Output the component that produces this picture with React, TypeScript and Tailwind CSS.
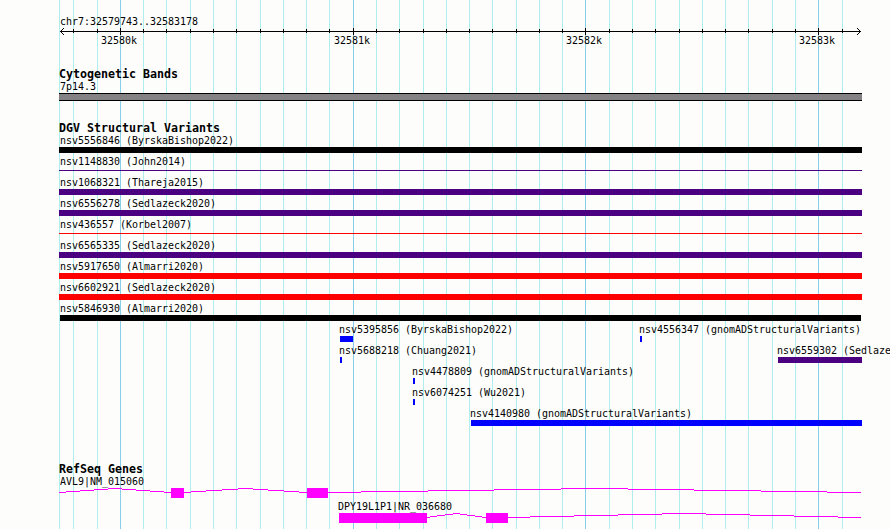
const minorTicks = [
  73, 97, 143, 166, 190, 213, 236, 260, 283, 306, 329, 376, 399, 423, 446, 469, 492, 516, 539, 562,
  609, 632, 655, 679, 702, 725, 748, 772, 795, 842,
];
const majorTicks = [
  { x: 120, label: "32580k" },
  { x: 353, label: "32581k" },
  { x: 585, label: "32582k" },
  { x: 818, label: "32583k" },
];

type Feature = { start: number; end: number; label: string; color: string; thin?: boolean };

const INDIGO = "bg-[#4b0082]";
const RED = "bg-[#ff0000]";
const BLUE = "bg-[#0000ff]";

const variants: Feature[][] = [
  [{ start: 59, end: 862, label: "nsv5556846 (ByrskaBishop2022)", color: "bg-black" }],
  [{ start: 59, end: 862, label: "nsv1148830 (John2014)", color: INDIGO, thin: true }],
  [{ start: 59, end: 862, label: "nsv1068321 (Thareja2015)", color: INDIGO }],
  [{ start: 59, end: 862, label: "nsv6556278 (Sedlazeck2020)", color: INDIGO }],
  [{ start: 59, end: 862, label: "nsv436557 (Korbel2007)", color: RED, thin: true }],
  [{ start: 59, end: 862, label: "nsv6565335 (Sedlazeck2020)", color: INDIGO }],
  [{ start: 59, end: 862, label: "nsv5917650 (Almarri2020)", color: RED }],
  [{ start: 59, end: 862, label: "nsv6602921 (Sedlazeck2020)", color: RED }],
  [{ start: 60, end: 861, label: "nsv5846930 (Almarri2020)", color: "bg-black" }],
  [
    { start: 340, end: 353, label: "nsv5395856 (ByrskaBishop2022)", color: BLUE },
    { start: 640, end: 642, label: "nsv4556347 (gnomADStructuralVariants)", color: BLUE },
  ],
  [
    { start: 340, end: 342, label: "nsv5688218 (Chuang2021)", color: BLUE },
    { start: 778, end: 862, label: "nsv6559302 (Sedlazeck2020)", color: INDIGO },
  ],
  [{ start: 413, end: 415, label: "nsv4478809 (gnomADStructuralVariants)", color: BLUE }],
  [{ start: 413, end: 415, label: "nsv6074251 (Wu2021)", color: BLUE }],
  [{ start: 471, end: 862, label: "nsv4140980 (gnomADStructuralVariants)", color: BLUE }],
];

// Each intron rises four pixels to its midpoint and falls back to the base line.
const introns = [
  { base: 6, xs: [59, 66, 80, 94, 108, 122, 136, 150, 164, 171] },
  { base: 6, xs: [184, 191, 206, 222, 238, 253, 268, 284, 299, 307] },
  { base: 6, xs: [328, 361, 428, 494, 561, 628, 694, 761, 827, 861] },
];
const introns2 = [
  { base: 6, xs: [427, 430, 437, 445, 453, 460, 467, 475, 482, 486] },
  { base: 6, xs: [508, 530, 574, 618, 662, 706, 750, 794, 838, 861] },
];

function Label({ children }: { children: string }) {
  return (
    <span className="block origin-left scale-x-[0.906] pt-[2px] text-[11px] leading-[13px] whitespace-pre">
      {children}
    </span>
  );
}

function Heading({ children }: { children: string }) {
  return (
    <h2 className="ml-[59px] h-[10px] origin-left scale-x-[0.969] text-[12px] leading-[13px] font-bold whitespace-pre">
      {children}
    </h2>
  );
}

function Gene({
  parts,
  exons,
}: {
  parts: { base: number; xs: number[] }[];
  exons: [number, number][];
}) {
  return (
    <svg width="890" height="12" shapeRendering="crispEdges" fill="#ff00ff" className="block">
      {parts.flatMap((p) =>
        p.xs.slice(0, -1).map((x, i) => (
          <rect
            key={x}
            x={x}
            y={p.base - 4 + Math.abs(4 - i)}
            width={p.xs[i + 1] - x}
            height="1"
          />
        )),
      )}
      {exons.map(([a, b]) => (
        <rect key={a} x={a} y="2" width={b - a} height="10" />
      ))}
    </svg>
  );
}

function Grid() {
  return (
    <svg
      width="890"
      height="529"
      shapeRendering="crispEdges"
      className="absolute top-0 left-0 -z-10"
    >
      {[59, ...minorTicks].map((x) => (
        <rect key={x} x={x} y="0" width="1" height="529" fill="#afeeee" />
      ))}
      {majorTicks.map(({ x }) => (
        <rect key={x} x={x} y="0" width="1" height="529" fill="#87ceeb" />
      ))}
    </svg>
  );
}

function Ruler() {
  return (
    <svg width="890" height="7" shapeRendering="crispEdges" className="block">
      <rect x="60" y="3" width="801" height="1" />
      {minorTicks.map((x) => (
        <rect key={x} x={x} y="1" width="1" height="4" />
      ))}
      {majorTicks.map(({ x }) => (
        <rect key={x} x={x} y="0" width="1" height="7" />
      ))}
      {[1, 2, 3].map((d) => (
        <g key={d}>
          <rect x={60 + d} y={3 - d} width="1" height="1" />
          <rect x={60 + d} y={3 + d} width="1" height="1" />
          <rect x={860 - d} y={3 - d} width="1" height="1" />
          <rect x={860 - d} y={3 + d} width="1" height="1" />
        </g>
      ))}
    </svg>
  );
}

function VariantRow({ features }: { features: Feature[] }) {
  return (
    <div className="flex h-[21px]">
      {features.map((f, i) => {
        const previousEnd = i === 0 ? 0 : features[i - 1].end;
        const indent = f.start === 59 ? "ml-px" : f.start > 60 ? "-ml-px" : "";
        return (
          <div
            key={f.label}
            className="shrink-0"
            style={{ marginLeft: f.start - previousEnd, width: f.end - f.start }}
          >
            <div className={`h-[15px] ${indent}`}>
              <Label>{f.label}</Label>
            </div>
            <div className={`${f.color} ${f.thin ? "mt-[2px] h-px" : "h-[6px]"}`} />
          </div>
        );
      })}
    </div>
  );
}

export default function App() {
  return (
    <main className="relative isolate flex h-[529px] w-[890px] flex-col overflow-hidden bg-[#fdfefc] pt-[13px] font-['DejaVu_Sans_Mono',monospace] text-black">
      <Grid />
      <header className="h-[54px] shrink-0">
        <div className="ml-[60px] h-[15px]">
          <Label>chr7:32579743..32583178</Label>
        </div>
        <Ruler />
        <div className="-mt-[3px] flex pl-[101px]">
          {majorTicks.map(({ x, label }, i) => (
            <div
              key={label}
              className="shrink-0"
              style={{ width: i < 3 ? majorTicks[i + 1].x - x : 60 }}
            >
              <Label>{label}</Label>
            </div>
          ))}
        </div>
      </header>
      <section className="h-[54px] shrink-0 pt-px">
        <Heading>Cytogenetic Bands</Heading>
        <div className="ml-[60px] h-[15px]">
          <Label>7p14.3</Label>
        </div>
        <div className="ml-[59px] h-[8px] w-[803px] border-y border-black bg-[#848284]" />
      </section>
      <section className="h-[341px] shrink-0 pt-px">
        <Heading>DGV Structural Variants</Heading>
        <div>
          {variants.map((row) => (
            <VariantRow key={row[0].label} features={row} />
          ))}
        </div>
      </section>
      <section className="shrink-0 pt-px">
        <Heading>RefSeq Genes</Heading>
        <div className="ml-[60px] h-[13px]">
          <Label>AVL9|NM_015060</Label>
        </div>
        <Gene
          parts={introns}
          exons={[
            [171, 184],
            [307, 328],
          ]}
        />
        <div className="ml-[338px] h-[13px]">
          <Label>DPY19L1P1|NR_036680</Label>
        </div>
        <Gene
          parts={introns2}
          exons={[
            [339, 427],
            [486, 508],
          ]}
        />
      </section>
    </main>
  );
}
